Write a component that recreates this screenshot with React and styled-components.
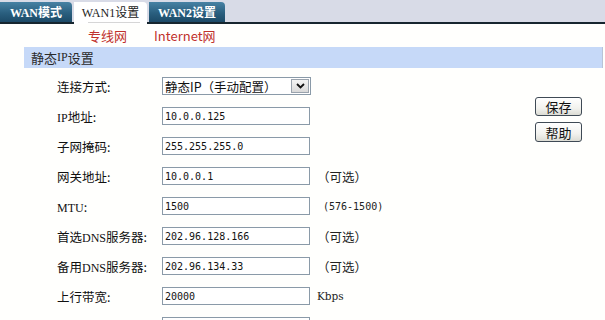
import React from 'react';
import styled, { createGlobalStyle } from 'styled-components';

const GlobalStyle = createGlobalStyle`
  html, body {
    margin: 0;
    padding: 0;
    overflow: hidden;
    background: #fffffd;
  }
  body {
    font-family: "Noto Sans CJK SC", sans-serif;
    font-size: 12px;
    color: #1a1a1a;
  }
`;

const Page = styled.div`
  width: 605px;
  height: 320px;
  overflow: hidden;
`;

// top tab strip
const TabBar = styled.div`
  display: flex;
  align-items: flex-end;
  height: 22px;
  background: #d8dbe7;
  border-bottom: 2px solid #17262f;
`;

const Tab = styled.div`
  position: relative;
  height: 20px;
  margin-right: ${(p) => p.$gap || 1}px;
  margin-bottom: ${(p) => (p.$active ? '-2px' : '0')};
  width: ${(p) => p.$w}px;
  display: flex;
  align-items: center;
  justify-content: center;
  font-family: "Liberation Serif", "Noto Sans CJK SC", serif;
  font-size: 12px;
  font-weight: ${(p) => (p.$active ? 400 : 700)};
  color: ${(p) => (p.$active ? '#222' : '#ffffff')};
  background: ${(p) =>
    p.$active ? '#ffffff' : 'linear-gradient(#4782a4, #2a5f7f 55%, #1c4a67)'};
  border-radius: 0 4px 0 0;
  padding-bottom: ${(p) => (p.$active ? '2px' : '0')};

  ${(p) =>
    p.$active &&
    `
    &::after {
      content: '';
      position: absolute;
      left: 14px;
      right: 7px;
      bottom: 1px;
      height: 1px;
      background: #d6d6d6;
    }
  `}
`;

const SubNav = styled.div`
  display: flex;
  align-items: center;
  gap: 27px;
  height: 23px;
  padding-left: 88px;
`;

const SubLink = styled.span`
  font-size: 13px;
  color: #c0302c;
  cursor: pointer;
`;

const Section = styled.div`
  margin-left: 24px;
  width: 579px;
`;

const SectionHeader = styled.div`
  height: 21px;
  display: flex;
  align-items: center;
  padding-left: 7px;
  background: #c6d9f8;
  border-right: 1px solid #b9c4d6;
  font-size: 13px;
  color: #2a2a2a;
`;

const Body = styled.div`
  display: flex;
  justify-content: space-between;
`;

const Form = styled.div`
  display: grid;
  grid-template-columns: 105px 149px auto;
  grid-auto-rows: 30px;
  align-items: center;
  padding: 3px 0 0 33px;
`;

const Label = styled.span`
  font-size: 12.5px;
  color: #111;
  white-space: nowrap;
`;

const Latin = styled.span`
  font-family: "Liberation Serif", serif;
  font-size: 12px;
`;

const TextBox = styled.div`
  box-sizing: border-box;
  height: 18px;
  width: ${(p) => p.$w || 148}px;
  border: 1px solid #8a9aa8;
  background: #fff;
  display: flex;
  align-items: center;
  padding-left: 2px;
  font-family: "DejaVu Sans Mono", monospace;
  font-size: 10px;
  color: #111;
`;

const SelectBox = styled(TextBox)`
  justify-content: space-between;
  padding-right: 1px;
  font-family: "Noto Sans CJK SC", sans-serif;
  font-size: 12.5px;
`;

const DropButton = styled.span`
  box-sizing: border-box;
  width: 18px;
  height: 14px;
  border: 1px solid #9aa3ad;
  background: linear-gradient(#f4f4f4, #d9d9d9);
  display: flex;
  align-items: center;
  justify-content: center;
`;

const hintFonts = {
  cjk: '"Noto Sans CJK SC", sans-serif',
  mono: '"DejaVu Sans Mono", monospace',
  serif: '"DejaVu Serif", serif',
};

const hintSizes = { cjk: 12.5, mono: 10, serif: 10.5 };

const Hint = styled.span`
  padding-left: ${(p) => p.$pad}px;
  font-family: ${(p) => hintFonts[p.$kind]};
  font-size: ${(p) => hintSizes[p.$kind]}px;
  color: #222;
  white-space: nowrap;
`;

const Actions = styled.div`
  display: flex;
  flex-direction: column;
  gap: 6px;
  margin: 29px 21px 0 0;
`;

const Button = styled.button`
  box-sizing: border-box;
  width: 47px;
  height: ${(p) => p.$h || 20}px;
  padding: 0;
  border: 1px solid #3f4a55;
  border-radius: 3px;
  background: linear-gradient(#ffffff, #f2f2ee 60%, #dcdcd4);
  font-family: "Noto Sans CJK SC", sans-serif;
  font-size: 13px;
  color: #111;
  line-height: 1;
`;

const Chevron = () => (
  <svg width="9" height="6" viewBox="0 0 9 6">
    <path d="M1 1 L4.5 4.5 L8 1" fill="none" stroke="#111" strokeWidth="1.8" />
  </svg>
);

const rows = [
  { label: '连接方式:', select: '静态IP（手动配置）' },
  { label: <><Latin>IP</Latin>地址:</>, value: '10.0.0.125' },
  { label: '子网掩码:', value: '255.255.255.0' },
  { label: '网关地址:', value: '10.0.0.1', hint: '（可选）', kind: 'cjk', pad: 6 },
  { label: <><Latin>MTU</Latin>:</>, value: '1500', hint: '(576-1500)', kind: 'mono', pad: 12 },
  { label: <>首选<Latin>DNS</Latin>服务器:</>, value: '202.96.128.166', hint: '（可选）', kind: 'cjk', pad: 6 },
  { label: <>备用<Latin>DNS</Latin>服务器:</>, value: '202.96.134.33', hint: '（可选）', kind: 'cjk', pad: 6 },
  { label: '上行带宽:', value: '20000', hint: 'Kbps', kind: 'serif', pad: 6 },
  { label: '下行带宽:', value: '20000', hint: 'Kbps', kind: 'serif', pad: 6 },
];

export default function App() {
  return (
    <Page>
      <GlobalStyle />
      <TabBar>
        <Tab $w={72} $gap={2}>WAN模式</Tab>
        <Tab $w={73} $gap={2} $active>WAN1设置</Tab>
        <Tab $w={76}>WAN2设置</Tab>
      </TabBar>
      <SubNav>
        <SubLink>专线网</SubLink>
        <SubLink>Internet网</SubLink>
      </SubNav>
      <Section>
        <SectionHeader>
          静态<Latin>IP</Latin>设置
        </SectionHeader>
        <Body>
          <Form>
            {rows.map((r, i) => (
              <React.Fragment key={i}>
                <Label>{r.label}</Label>
                {r.select ? (
                  <SelectBox $w={149}>
                    {r.select}
                    <DropButton>
                      <Chevron />
                    </DropButton>
                  </SelectBox>
                ) : (
                  <TextBox>{r.value}</TextBox>
                )}
                {r.hint ? (
                  <Hint $kind={r.kind} $pad={r.pad}>
                    {r.hint}
                  </Hint>
                ) : (
                  <span />
                )}
              </React.Fragment>
            ))}
          </Form>
          <Actions>
            <Button $h={19}>保存</Button>
            <Button>帮助</Button>
          </Actions>
        </Body>
      </Section>
    </Page>
  );
}
